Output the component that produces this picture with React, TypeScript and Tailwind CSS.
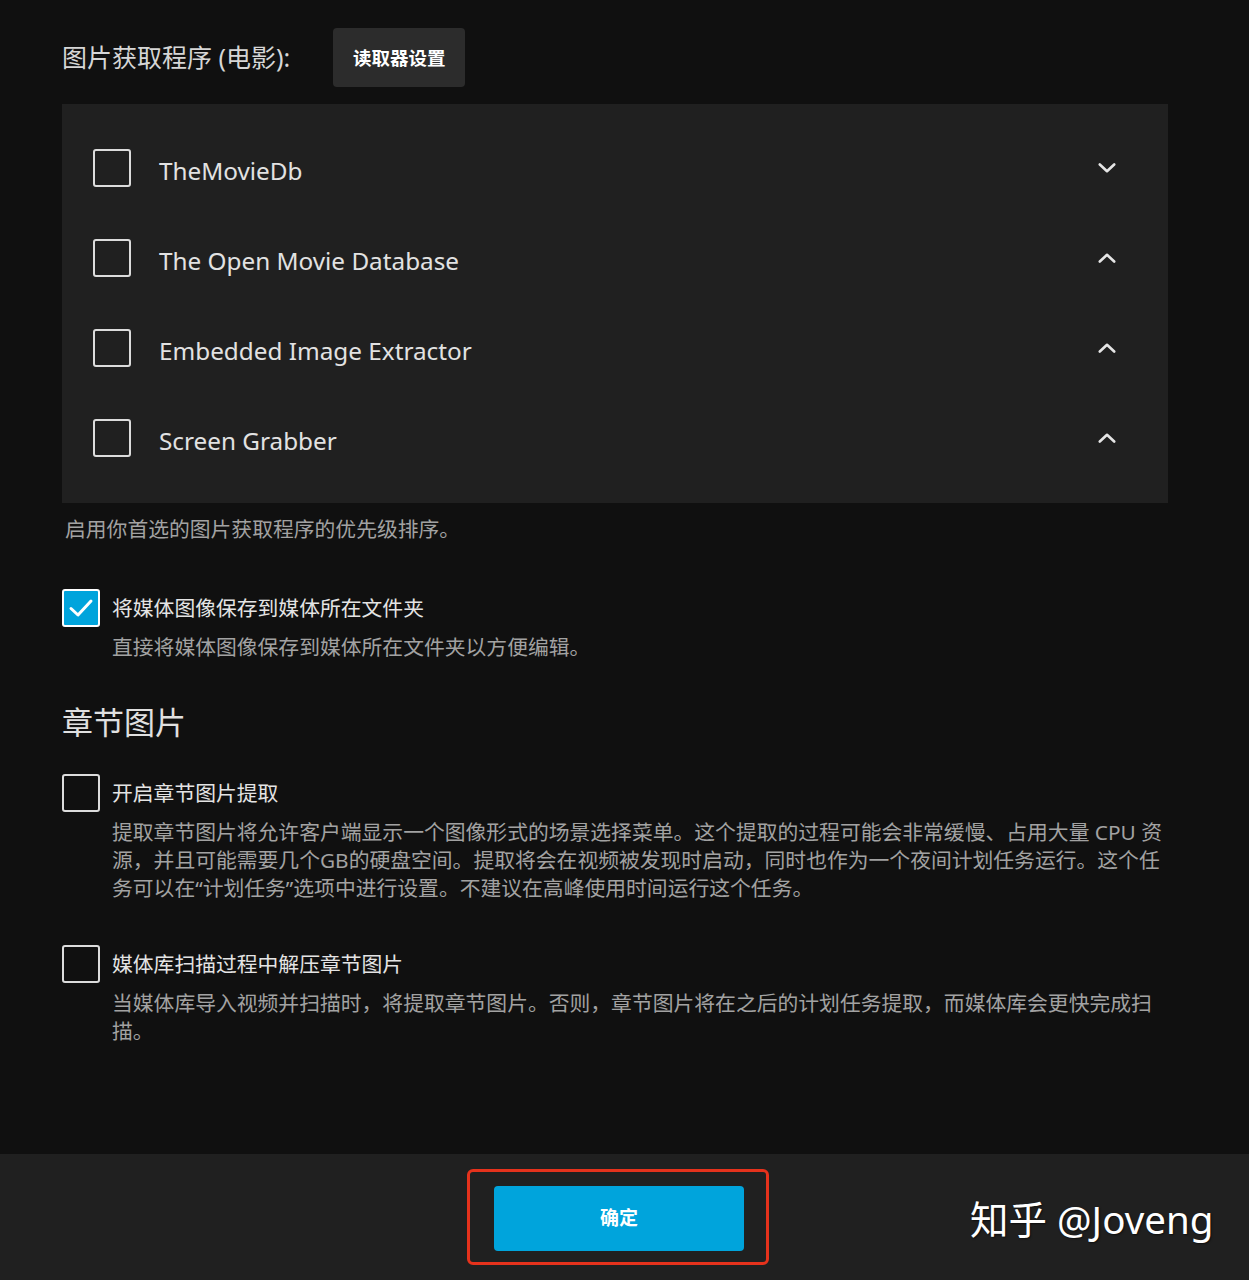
import React from 'react';

const fontStack = { fontFamily: '"Noto Sans", "Noto Sans CJK SC", sans-serif' };

const fetchers = [
  { name: 'TheMovieDb', open: false },
  { name: 'The Open Movie Database', open: true },
  { name: 'Embedded Image Extractor', open: true },
  { name: 'Screen Grabber', open: true },
];

const Chevron = ({ up }: { up: boolean }) => (
  <svg width="18" height="10" viewBox="0 0 18 10" fill="none">
    <path
      d={up ? 'M1.8 8.5 L9 1.8 L16.2 8.5' : 'M1.8 1.5 L9 8.2 L16.2 1.5'}
      stroke="#e6e6e6"
      strokeWidth="2.6"
      strokeLinecap="round"
      strokeLinejoin="round"
    />
  </svg>
);

const Box = ({ checked = false }: { checked?: boolean }) => (
  <div
    className={`w-[38px] h-[38px] shrink-0 rounded-[3px] border-[2.5px] border-[#dcdcdc] flex items-center justify-center ${
      checked ? 'bg-[#00a4dc] border-white' : ''
    }`}
  >
    {checked && (
      <svg width="26" height="22" viewBox="0 0 26 22" fill="none">
        <path d="M3 11.5 L10 18 L23 4" stroke="white" strokeWidth="3" strokeLinecap="round" strokeLinejoin="round" />
      </svg>
    )}
  </div>
);

const Option = ({
  label,
  desc,
  checked,
}: {
  label: string;
  desc: string;
  checked?: boolean;
}) => (
  <div className="flex items-start gap-3">
    <Box checked={checked} />
    <div className="flex-1">
      <div className="text-[20.8px] leading-[38px] text-[#e4e4e4]">{label}</div>
      <div className="mt-[6px] text-[20.8px] leading-7 text-[#a2a2a2]">{desc}</div>
    </div>
  </div>
);

export default function App() {
  return (
    <div className="min-h-screen flex flex-col bg-[#101010]" style={fontStack}>
      <main className="flex-1 pt-[28px] pl-[62px] pr-[81px]">
        {/* header */}
        <div className="flex items-center gap-[43px]">
          <h2 className="text-[25px] text-[#d6d6d6]">图片获取程序 (电影):</h2>
          <button className="h-[59px] w-[132px] rounded bg-[#2c2c2c] text-[18.5px] font-bold text-white">
            读取器设置
          </button>
        </div>

        {/* fetcher list */}
        <div className="mt-[17px] bg-[#202020] pt-[19px] pb-[20px] pl-[31px] pr-[52px]">
          {fetchers.map((f) => (
            <div key={f.name} className="h-[90px] flex items-center">
              <Box />
              <span className="ml-[28px] mt-[7px] flex-1 text-[24.3px] text-[#e2e2e2]">{f.name}</span>
              <Chevron up={f.open} />
            </div>
          ))}
        </div>
        <p className="mt-[12px] pl-[3px] text-[20.8px] leading-7 text-[#a2a2a2]">
          启用你首选的图片获取程序的优先级排序。
        </p>

        <div className="mt-[46px]">
          <Option
            checked
            label="将媒体图像保存到媒体所在文件夹"
            desc="直接将媒体图像保存到媒体所在文件夹以方便编辑。"
          />
        </div>

        <h2 className="mt-[41px] text-[31px] leading-10 text-[#e0e0e0]">章节图片</h2>

        <div className="mt-[32px]">
          <Option
            label="开启章节图片提取"
            desc="提取章节图片将允许客户端显示一个图像形式的场景选择菜单。这个提取的过程可能会非常缓慢、占用大量 CPU 资源，并且可能需要几个GB的硬盘空间。提取将会在视频被发现时启动，同时也作为一个夜间计划任务运行。这个任务可以在“计划任务”选项中进行设置。不建议在高峰使用时间运行这个任务。"
          />
        </div>

        <div className="mt-[43px]">
          <Option
            label="媒体库扫描过程中解压章节图片"
            desc="当媒体库导入视频并扫描时，将提取章节图片。否则，章节图片将在之后的计划任务提取，而媒体库会更快完成扫描。"
          />
        </div>
      </main>

      {/* footer bar */}
      <div className="relative h-[126px] bg-[#202020] pt-[15px] pl-[467px]">
        <div className="w-[302px] h-[96px] rounded-md border-[3px] border-[#e5321c] pt-[14px] pl-[24px]">
          <button className="h-[65px] w-[250px] rounded bg-[#00a4dc] text-[19px] font-bold text-white">
            确定
          </button>
        </div>
        <div className="absolute left-[970px] top-[39px] text-[38.5px] leading-[52px] text-white [text-shadow:1px_1px_2px_rgba(0,0,0,0.6)]">
          知乎 @Joveng
        </div>
      </div>
    </div>
  );
}
